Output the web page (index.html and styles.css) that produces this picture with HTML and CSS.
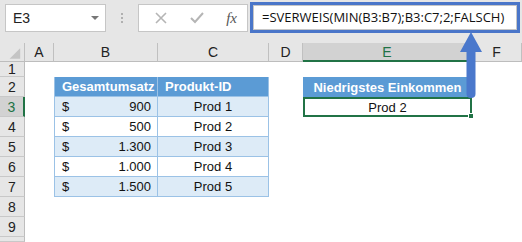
FILE: index.html
```html
<!DOCTYPE html>
<html>
<head>
<meta charset="utf-8">
<link rel="stylesheet" href="styles.css">
</head>
<body>
<div class="toolbar">
  <div class="namebox"><span>E3</span><span class="dd"></span></div>
  <div class="dots"><i></i><i></i><i></i></div>
  <div class="fxbox">
    <svg class="ico" width="14" height="14" viewBox="0 0 14 14"><path d="M2 2 L12 12 M12 2 L2 12" stroke="#b5b5b5" stroke-width="1.6" fill="none"/></svg>
    <svg class="ico" width="16" height="14" viewBox="0 0 16 14"><path d="M2 7 L6 11 L14 2" stroke="#b5b5b5" stroke-width="2" fill="none"/></svg>
    <span class="fx">fx</span>
  </div>
  <div class="formula"><div class="finner">=SVERWEIS(MIN(B3:B7);B3:C7;2;FALSCH)</div></div>
</div>
<div class="sheet">
  <div class="ch corner"><svg width="25" height="19" viewBox="0 0 25 19"><path d="M21 5 L21 16 L10 16 Z" fill="#c4c4c4"/></svg></div>
  <div class="ch">A</div><div class="ch">B</div><div class="ch">C</div><div class="ch">D</div><div class="ch sel">E</div><div class="ch">F</div>

  <div class="rh">1</div><div class="c"></div><div class="c"></div><div class="c"></div><div class="c"></div><div class="c"></div><div class="c"></div>

  <div class="rh">2</div><div class="c"></div><div class="t th tl">Gesamtumsatz</div><div class="t th">Produkt-ID</div><div class="c"></div><div class="t th eh">Niedrigstes Einkommen</div><div class="c"></div>

  <div class="rh rsel">3</div><div class="c"></div><div class="t band tl num"><span>$</span><span>900</span></div><div class="t band ctr">Prod 1</div><div class="c"></div><div class="c esel">Prod 2<span class="handle"></span></div><div class="c"></div>

  <div class="rh">4</div><div class="c"></div><div class="t tl num"><span>$</span><span>500</span></div><div class="t ctr">Prod 2</div><div class="c"></div><div class="c"></div><div class="c"></div>

  <div class="rh">5</div><div class="c"></div><div class="t band tl num"><span>$</span><span>1.300</span></div><div class="t band ctr">Prod 3</div><div class="c"></div><div class="c"></div><div class="c"></div>

  <div class="rh">6</div><div class="c"></div><div class="t tl num"><span>$</span><span>1.000</span></div><div class="t ctr">Prod 4</div><div class="c"></div><div class="c"></div><div class="c"></div>

  <div class="rh">7</div><div class="c"></div><div class="t band tl num"><span>$</span><span>1.500</span></div><div class="t band ctr">Prod 5</div><div class="c"></div><div class="c"></div><div class="c"></div>

  <div class="rh">8</div><div class="c"></div><div class="c"></div><div class="c"></div><div class="c"></div><div class="c"></div><div class="c"></div>
  <div class="rh">9</div><div class="c"></div><div class="c"></div><div class="c"></div><div class="c"></div><div class="c"></div><div class="c"></div>
  <div class="rh"></div><div class="c"></div><div class="c"></div><div class="c"></div><div class="c"></div><div class="c"></div><div class="c"></div>
</div>
<svg class="arrow" width="30" height="70" viewBox="0 0 30 70">
  <path d="M15 0 L26 20 L19.5 20 L19.5 62 Q19.5 66 15 66 Q10.5 66 10.5 62 L10.5 20 L4 20 Z" fill="#4a78cc"/>
</svg>
</body>
</html>
```
FILE: styles.css
```css
* { box-sizing: border-box; }
html, body { margin: 0; padding: 0; }
body {
  width: 522px; height: 242px; overflow: hidden; background: #fff;
  font-family: "Liberation Sans", Arial, sans-serif; position: relative;
}
.toolbar {
  height: 43px; background: #e6e6e6; display: flex; align-items: flex-start;
  padding: 4px 0 0 5px;
}
.namebox {
  width: 101px; height: 28px; background: #fff; border: 1px solid #c6c6c6;
  display: flex; align-items: center; justify-content: space-between;
  padding: 0 6px 0 7px; font-size: 14px; color: #222;
}
.dd { width: 0; height: 0; border-left: 4px solid transparent; border-right: 4px solid transparent; border-top: 4px solid #777; }
.dots { width: 32px; height: 28px; display: flex; flex-direction: column; align-items: center; justify-content: center; gap: 2px; }
.dots i { width: 2px; height: 2px; background: #b0b0b0; display: block; }
.fxbox {
  width: 110px; height: 28px; background: #fff; border: 1px solid #c6c6c6;
  display: flex; align-items: center; justify-content: space-between; padding: 0 10px 0 15px;
}
.fx { font-family: "Liberation Serif", serif; font-style: italic; font-size: 15px; color: #555; }
.formula {
  margin-left: 2px; margin-top: -2px; width: 270px; height: 31px;
  border: 3px solid #4a76c9; background: #fff;
}
.finner {
  height: 100%; border: 1px solid #c6c6c6; padding-left: 8px;
  font-family: "Open Sans", sans-serif; font-size: 13px; line-height: 22px; color: #111;
  white-space: nowrap;
}
.sheet {
  display: grid;
  grid-template-columns: 25px 29px 104px 111px 34px 169px 50px;
  grid-template-rows: 19px 15px repeat(8, 20px) 5px;
  font-family: "Liberation Sans", Arial, sans-serif; font-size: 13px;
}
.ch {
  background: #e6e6e6; border-right: 1px solid #c0c0c0; border-bottom: 1px solid #bdbdbd;
  display: flex; align-items: center; justify-content: center; color: #222; font-size: 14px;
}
.ch.corner { padding: 0; }
.ch.sel { background: #d2d2d2; border-bottom: 2px solid #217346; color: #217346; }
.rh {
  background: #e6e6e6; border-right: 1px solid #bdbdbd; border-bottom: 1px solid #c8c8c8;
  display: flex; align-items: center; justify-content: center; font-size: 14px; color: #222;
}
.rh.rsel { background: #d2d2d2; border-right: 2px solid #217346; color: #217346; }
.c { background: #fff; }
.t {
  border-right: 1px solid #9bc2e6; border-bottom: 1px solid #9bc2e6;
  display: flex; align-items: center; color: #111;
}
.tl { border-left: 1px solid #9bc2e6; }
.th { background: #5b9bd5; color: #fff; font-weight: bold; padding-left: 7px; border-color: #9bc2e6; }
.th.eh { justify-content: center; padding: 0; border: none; }
.band { background: #ddebf7; }
.num { justify-content: space-between; padding: 0 6px 0 7px; }
.ctr { justify-content: center; }
.esel {
  border: 2px solid #217346; display: flex; align-items: center; justify-content: center;
  position: relative; font-size: 13px; color: #111;
}
.handle { position: absolute; right: -4px; bottom: -4px; width: 6px; height: 6px; background: #217346; border: 1px solid #fff; }
.arrow { position: absolute; left: 456px; top: 32px; }
```
